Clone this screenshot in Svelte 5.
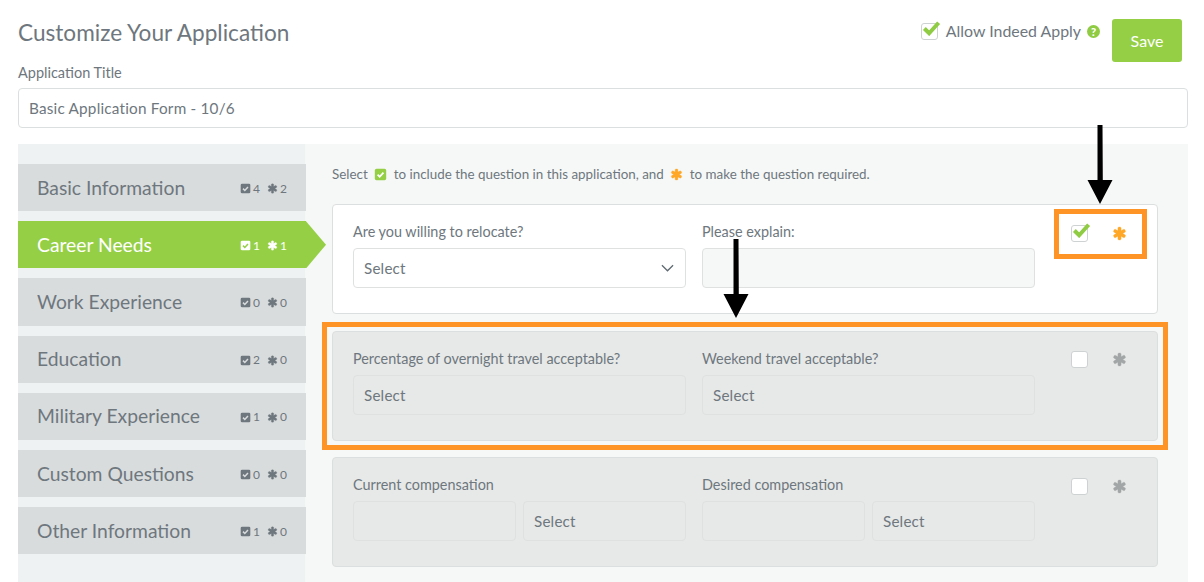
<script>
  const tabs = [
    { name: 'Basic Information', checks: 4, stars: 2 },
    { name: 'Career Needs', checks: 1, stars: 1, active: true },
    { name: 'Work Experience', checks: 0, stars: 0 },
    { name: 'Education', checks: 2, stars: 0 },
    { name: 'Military Experience', checks: 1, stars: 0 },
    { name: 'Custom Questions', checks: 0, stars: 0 },
    { name: 'Other Information', checks: 1, stars: 0 }
  ];

  const asterisk =
    'M1546 1050q46 26 59.5 77.5t-12.5 97.5l-64 110q-26 46-77.5 59.5t-97.5-12.5l-266-153v307q0 52-38 90t-90 38h-128q-52 0-90-38t-38-90v-307l-266 153q-46 26-97.5 12.5t-77.5-59.5l-64-110q-26-46-12.5-97.5t59.5-77.5l266-154-266-154q-46-26-59.5-77.5t12.5-97.5l64-110q26-46 77.5-59.5t97.5 12.5l266 153v-307q0-52 38-90t90-38h128q52 0 90 38t38 90v307l266-153q46-26 97.5-12.5t77.5 59.5l64 110q26 46 12.5 97.5t-59.5 77.5l-266 154z';
</script>

{#snippet star(cls)}
  <svg class={cls} viewBox="0 0 1792 1792"><path d={asterisk} fill="currentColor" stroke="currentColor" stroke-width="40" /></svg>
{/snippet}

{#snippet checkSquare(cls)}
  <svg class={cls} viewBox="0 0 16 16">
    <path class="sq" d="M3 1h10a2 2 0 0 1 2 2v10a2 2 0 0 1-2 2H3a2 2 0 0 1-2-2V3a2 2 0 0 1 2-2z" fill="currentColor" />
    <path class="tick" d="M4.4 8.2l2.6 2.6 4.6-5" fill="none" stroke-width="2.2" />
  </svg>
{/snippet}

{#snippet checkbox(checked)}
  <span class="box" class:checked>
    {#if checked}
      <svg viewBox="0 0 20 16"><path d="M2.5 8.5l5 5L17.5 2.5" fill="none" stroke="#8fcb43" stroke-width="4.2" /></svg>
    {/if}
  </span>
{/snippet}

<div class="page">
  <header>
    <h1>Customize Your Application</h1>
    <div class="header-right">
      <div class="allow">
        {@render checkbox(true)}
        <span>Allow Indeed Apply</span>
        <span class="help">?</span>
      </div>
      <button class="save">Save</button>
    </div>
  </header>

  <div class="title-field">
    <label for="app-title">Application Title</label>
    <input id="app-title" type="text" value="Basic Application Form - 10/6" />
  </div>

  <div class="panel">
    <nav class="sidebar">
      {#each tabs as tab}
        <div class="tab" class:active={tab.active}>
          <span class="tab-name">{tab.name}</span>
          <span class="counts">
            {@render checkSquare('count-check')}
            <span class="num">{tab.checks}</span>
            {@render star('count-star')}
            <span class="num">{tab.stars}</span>
          </span>
        </div>
      {/each}
    </nav>

    <section class="questions">
      <p class="hint">
        Select
        {@render checkSquare('hint-check')}
        to include the question in this application, and
        {@render star('hint-star')}
        to make the question required.
      </p>

      <div class="card on">
        <div class="fields">
          <div class="field">
            <div class="q">Are you willing to relocate?</div>
            <div class="control white">
              <span>Select</span>
              <svg class="chevron" viewBox="0 0 14 8"><path d="M1 1l6 6 6-6" fill="none" stroke="#5f6a72" stroke-width="1.4" /></svg>
            </div>
          </div>
          <div class="field">
            <div class="q">Please explain:</div>
            <div class="control"></div>
          </div>
        </div>
        <div class="toggles">
          {@render checkbox(true)}
          {@render star('req on')}
        </div>
      </div>

      <div class="card">
        <div class="fields">
          <div class="field">
            <div class="q">Percentage of overnight travel acceptable?</div>
            <div class="control"><span>Select</span></div>
          </div>
          <div class="field">
            <div class="q">Weekend travel acceptable?</div>
            <div class="control"><span>Select</span></div>
          </div>
        </div>
        <div class="toggles">
          {@render checkbox(false)}
          {@render star('req')}
        </div>
      </div>

      <div class="card">
        <div class="fields">
          <div class="field">
            <div class="q">Current compensation</div>
            <div class="pair">
              <div class="control"></div>
              <div class="control"><span>Select</span></div>
            </div>
          </div>
          <div class="field">
            <div class="q">Desired compensation</div>
            <div class="pair">
              <div class="control"></div>
              <div class="control"><span>Select</span></div>
            </div>
          </div>
        </div>
        <div class="toggles">
          {@render checkbox(false)}
          {@render star('req')}
        </div>
      </div>
    </section>
  </div>

  <!-- annotations drawn over the screenshot -->
  <div class="mark mark-toggles"></div>
  <div class="mark mark-row"></div>
  <svg class="arrow arrow-a" viewBox="0 0 26 80"><path d="M10.5 0h5l.3 55H25.5L13 79 .5 55h10z" /></svg>
  <svg class="arrow arrow-b" viewBox="0 0 26 80"><path d="M10.5 0h5l.3 55H25.5L13 79 .5 55h10z" /></svg>
</div>

<style>
  :global(body) {
    background: #fff;
  }

  .page {
    position: relative;
    height: 582px;
    overflow: hidden;
    padding: 0 16px 0 18px;
    box-sizing: border-box;
    font-family: Lato, 'Open Sans', sans-serif;
    color: #6e777e;
  }

  header {
    display: flex;
    justify-content: space-between;
    height: 62px;
  }

  h1 {
    margin: 19px 0 0;
    font-size: 22.6px;
    line-height: 28px;
    font-weight: 400;
    color: #6e777e;
  }

  .header-right {
    display: flex;
    align-items: flex-start;
    padding-right: 6px;
  }

  .allow {
    display: flex;
    align-items: center;
    gap: 8px;
    margin-top: 21px;
    margin-right: 12px;
    font-size: 15.9px;
    line-height: 20px;
  }

  .help {
    width: 13px;
    height: 13px;
    margin-left: -2px;
    border-radius: 50%;
    background: #8fcb43;
    color: #fff;
    font-size: 11px;
    font-weight: 900;
    line-height: 13px;
    text-align: center;
  }

  .save {
    width: 70px;
    height: 43px;
    margin-top: 19px;
    border: none;
    border-radius: 3px;
    background: #95cf45;
    color: #fff;
    font: 400 16px Lato, sans-serif;
  }

  .title-field label {
    display: block;
    margin-top: 2px;
    font-size: 14.5px;
    line-height: 18px;
  }

  .title-field input {
    display: block;
    width: 100%;
    height: 40px;
    margin-top: 6px;
    padding: 0 10px;
    box-sizing: border-box;
    border: 1px solid #dcdfdf;
    border-radius: 4px;
    color: #6e777e;
    font: 400 15.3px Lato, sans-serif;
    letter-spacing: 0.2px;
  }

  .panel {
    display: flex;
    height: 438px;
    margin-top: 16px;
    background: #f6f8f7;
  }

  .sidebar {
    width: 287px;
    padding-top: 20px;
    background: #eff2f3;
  }

  .tab {
    position: relative;
    display: flex;
    align-items: center;
    justify-content: space-between;
    width: 288px;
    height: 47.2px;
    margin-bottom: 10px;
    padding: 0 19px;
    box-sizing: border-box;
    background: #d9dcdd;
    color: #6e777e;
  }

  .tab.active {
    background: #95cf45;
    color: #fff;
  }

  .tab.active::after {
    content: '';
    position: absolute;
    top: 0;
    left: 100%;
    width: 20px;
    height: 100%;
    background: #95cf45;
    clip-path: polygon(0 0, 100% 50%, 0 100%);
  }

  .tab-name {
    font-size: 19.3px;
    line-height: 24px;
  }

  .counts {
    display: flex;
    align-items: center;
    margin-top: 2px;
    font-size: 12px;
    line-height: 14px;
    letter-spacing: 0.3px;
  }

  .num {
    width: 7px;
    margin-left: 2px;
  }

  :global(.count-check) {
    width: 11px;
    height: 11px;
  }

  :global(.count-star) {
    width: 11px;
    height: 11px;
    margin-left: 7px;
  }

  .tick {
    stroke: #d9dcdd;
  }

  .tab.active .tick {
    stroke: #95cf45;
  }

  .questions {
    flex: 1;
    padding: 20px 30px 0 27px;
  }

  .hint {
    display: flex;
    align-items: center;
    gap: 5px;
    height: 20px;
    margin: 0 0 20px;
    font-size: 13.4px;
    line-height: 20px;
  }

  :global(.hint-check) {
    width: 13px;
    height: 13px;
    margin: 0 1.5px;
    color: #95cf45;
  }

  .hint .tick {
    stroke: #fff;
  }

  :global(.hint-star) {
    width: 13px;
    height: 13px;
    margin: 0 1.5px;
    color: #ffa726;
  }

  .card {
    display: flex;
    height: 110px;
    margin-bottom: 16.5px;
    padding: 18px 0 0 20px;
    box-sizing: border-box;
    border: 1px solid #dcdfdf;
    border-radius: 4px;
    background: #e7e9e8;
  }

  .card.on {
    background: #fff;
  }

  .fields {
    display: grid;
    grid-template-columns: 333px 333px;
    gap: 16px;
  }

  .q {
    height: 18px;
    margin-bottom: 7px;
    font-size: 14.4px;
    line-height: 18px;
    white-space: nowrap;
  }

  .control {
    display: flex;
    align-items: center;
    justify-content: space-between;
    height: 40px;
    padding: 0 10px;
    box-sizing: border-box;
    border: 1px solid #dfe1e0;
    border-radius: 4px;
    font-size: 15.2px;
    letter-spacing: 0.2px;
  }

  .on .control {
    background: #f6f8f7;
  }

  .on .control.white {
    background: #fff;
  }

  .chevron {
    width: 13px;
    height: 8px;
    margin-right: 1px;
  }

  .pair {
    display: grid;
    grid-template-columns: 163px 163px;
    gap: 7px;
  }

  .toggles {
    display: flex;
    align-items: center;
    gap: 24px;
    height: 18px;
    margin: 1px 0 0 36px;
  }

  .box {
    position: relative;
    display: block;
    flex: none;
    width: 15px;
    height: 15px;
    border: 1px solid #cfd2d2;
    border-radius: 3px;
    background: #fff;
  }

  .box svg {
    position: absolute;
    top: -4px;
    left: 0;
    width: 19px;
    height: 16px;
  }

  :global(.req) {
    width: 15px;
    height: 15px;
    color: #a3a6a6;
  }

  :global(.req.on) {
    color: #ffa726;
  }

  .mark {
    position: absolute;
    box-sizing: border-box;
    border: 5px solid #ff9426;
  }

  .mark-toggles {
    top: 209px;
    left: 1054px;
    width: 93px;
    height: 50px;
  }

  .mark-row {
    top: 322px;
    left: 322px;
    width: 846px;
    height: 128px;
  }

  .arrow {
    position: absolute;
    width: 26px;
    height: 80px;
    fill: #000;
  }

  .arrow-a {
    top: 125px;
    left: 1087px;
  }

  .arrow-b {
    top: 239px;
    left: 723px;
  }
</style>
